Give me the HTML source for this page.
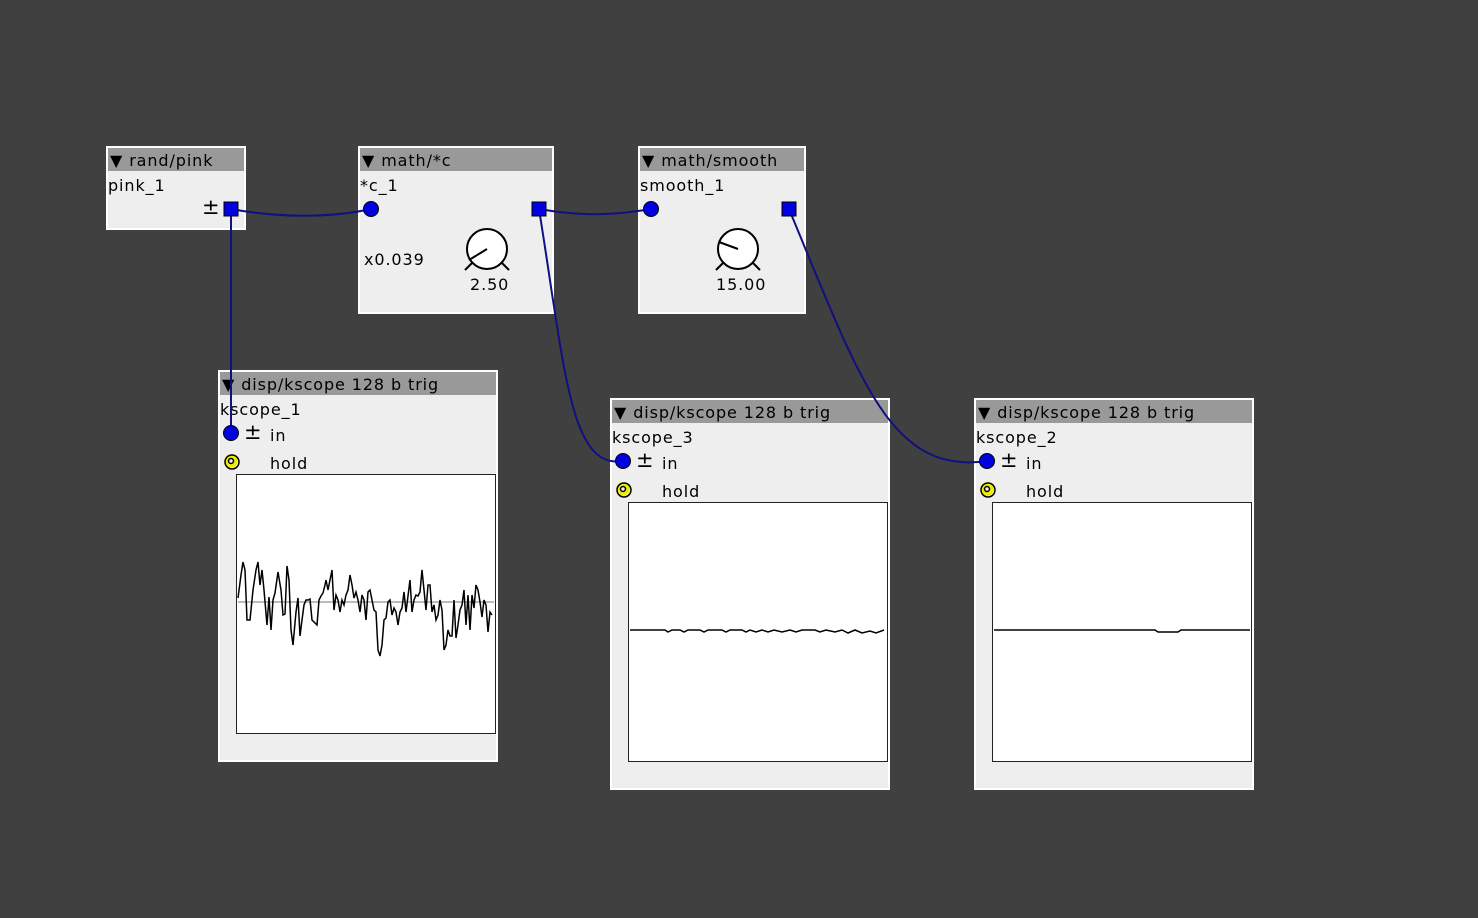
<!DOCTYPE html><html><head><style>
body{margin:0;width:1478px;height:918px;background:#404040;position:relative;overflow:hidden;font-family:"DejaVu Sans","Liberation Sans",sans-serif;font-size:16px;letter-spacing:0.9px;color:#000}
.b{position:absolute;background:#eee;border:2px solid #fff;box-sizing:border-box}
.h{position:absolute;left:0;right:0;top:0;height:23px;background:#999;line-height:26px;padding-left:2px;white-space:nowrap}
.t{position:absolute;white-space:nowrap;line-height:18px}
.pm{font-size:21px}
.sc{position:absolute;background:#fff;border:1px solid #222;box-sizing:border-box}
svg{position:absolute;left:0;top:0}
</style></head><body>
<div class="b" style="left:106px;top:146px;width:140px;height:84px"><div class="h">▼ rand/pink</div><div class="t" style="left:0;top:29px">pink_1</div><div class="t pm" style="left:94px;top:50px">±</div></div>
<div class="b" style="left:358px;top:146px;width:196px;height:168px"><div class="h">▼ math/*c</div><div class="t" style="left:0;top:29px">*c_1</div><div class="t" style="left:4px;top:103px">x0.039</div><div class="t" style="left:110px;top:128px">2.50</div></div>
<div class="b" style="left:638px;top:146px;width:168px;height:168px"><div class="h">▼ math/smooth</div><div class="t" style="left:0;top:29px">smooth_1</div><div class="t" style="left:76px;top:128px">15.00</div></div>

<div class="b" style="left:218px;top:370px;width:280px;height:392px"><div class="h">▼ disp/kscope 128 b trig</div><div class="t" style="left:0;top:29px">kscope_1</div><div class="t pm" style="left:24px;top:51px">±</div><div class="t" style="left:50px;top:55px">in</div><div class="t" style="left:50px;top:83px">hold</div><div class="sc" style="left:16px;top:102px;width:260px;height:260px"></div></div>
<div class="b" style="left:610px;top:398px;width:280px;height:392px"><div class="h">▼ disp/kscope 128 b trig</div><div class="t" style="left:0;top:29px">kscope_3</div><div class="t pm" style="left:24px;top:51px">±</div><div class="t" style="left:50px;top:55px">in</div><div class="t" style="left:50px;top:83px">hold</div><div class="sc" style="left:16px;top:102px;width:260px;height:260px"></div></div>
<div class="b" style="left:974px;top:398px;width:280px;height:392px"><div class="h">▼ disp/kscope 128 b trig</div><div class="t" style="left:0;top:29px">kscope_2</div><div class="t pm" style="left:24px;top:51px">±</div><div class="t" style="left:50px;top:55px">in</div><div class="t" style="left:50px;top:83px">hold</div><div class="sc" style="left:16px;top:102px;width:260px;height:260px"></div></div>

<svg width="1478" height="918">
<line x1="238" y1="602" x2="494" y2="602" stroke="#bbb" stroke-width="2"/>
<polyline fill="none" stroke="#000" stroke-width="1.5" points="238,598 241,575 243,562 245,570 247,620 250,620 253,590 256,570 258,562 260,585 262,570 264,590 267,625 269,597 271,630 273,600 275,593 278,572 281,590 283,615 285,614 287,566 289,580 291,630 293,645 296,612 298,598 300,636 302,620 304,605 306,600 308,600 310,599 312,620 315,623 317,625 319,600 321,596 323,593 325,585 326,580 328,590 330,580 332,570 334,610 336,595 338,600 340,612 342,600 344,605 346,595 348,590 350,575 352,585 354,598 356,592 358,600 360,612 362,595 364,600 366,620 368,592 370,590 372,600 374,610 376,612 378,650 380,656 382,645 384,620 386,618 388,602 390,600 392,615 394,608 396,612 398,625 400,612 402,608 404,592 406,612 408,596 410,580 412,612 414,600 416,595 418,596 420,592 422,570 424,590 426,610 428,585 430,585 432,612 434,605 436,620 438,615 440,600 442,610 444,650 446,645 448,630 450,636 452,636 454,600 456,638 458,625 460,610 462,605 464,590 466,625 468,595 470,630 472,595 474,608 476,585 478,590 480,602 482,617 484,600 486,605 488,632 490,612 492,615"/>
<polyline fill="none" stroke="#000" stroke-width="1.5" points="630,630 665,630 668,632 672,630 680,630 684,632 688,630 700,630 704,632 708,630 722,630 726,632 730,630 742,630 746,632 750,630 756,632 762,630 768,632 774,630 782,632 790,630 796,632 802,630 815,630 820,632 826,630 835,632 842,630 848,633 855,630 862,633 870,631 876,633 884,630"/>
<polyline fill="none" stroke="#000" stroke-width="1.5" points="994,630 1155,630 1158,632 1178,632 1181,630 1250,630"/>
<g fill="#fff" stroke="#000" stroke-width="2">
<circle cx="487" cy="249" r="20"/><circle cx="738" cy="249" r="20"/></g>
<g stroke="#000" stroke-width="2">
<line x1="487" y1="249" x2="469" y2="260"/><line x1="472" y1="263" x2="465" y2="270"/><line x1="502" y1="263" x2="509" y2="270"/>
<line x1="738" y1="249" x2="719" y2="242"/><line x1="723" y1="263" x2="716" y2="270"/><line x1="753" y1="263" x2="760" y2="270"/></g>
<g fill="none" stroke="#101080" stroke-width="2">
<path d="M231,209 C280,218 330,218 371,209"/>
<path d="M231,209 L231,433"/>
<path d="M539,209 C580,216 610,216 651,209"/>
<path d="M539,209 C565,370 570,470 623,461"/>
<path d="M789,209 C860,380 890,475 987,461"/>
</g>
<g fill="#0000e0" stroke="#000" stroke-width="1">
<rect x="224" y="202" width="14" height="14"/><rect x="532" y="202" width="14" height="14"/><rect x="782" y="202" width="14" height="14"/>
<circle cx="371" cy="209" r="7.5"/><circle cx="651" cy="209" r="7.5"/>
<circle cx="231" cy="433" r="7.5"/><circle cx="623" cy="461" r="7.5"/><circle cx="987" cy="461" r="7.5"/></g>
<g fill="none" stroke="#ee0" stroke-width="3.5">
<circle cx="231" cy="461" r="5"/><circle cx="623" cy="489" r="5"/><circle cx="987" cy="489" r="5"/></g>
<g fill="none" stroke="#000" stroke-width="1.5">
<circle cx="232" cy="462" r="7"/><circle cx="624" cy="490" r="7"/><circle cx="988" cy="490" r="7"/>
<circle cx="231" cy="461" r="2.5"/><circle cx="623" cy="489" r="2.5"/><circle cx="987" cy="489" r="2.5"/></g>
</svg>
</body></html>
